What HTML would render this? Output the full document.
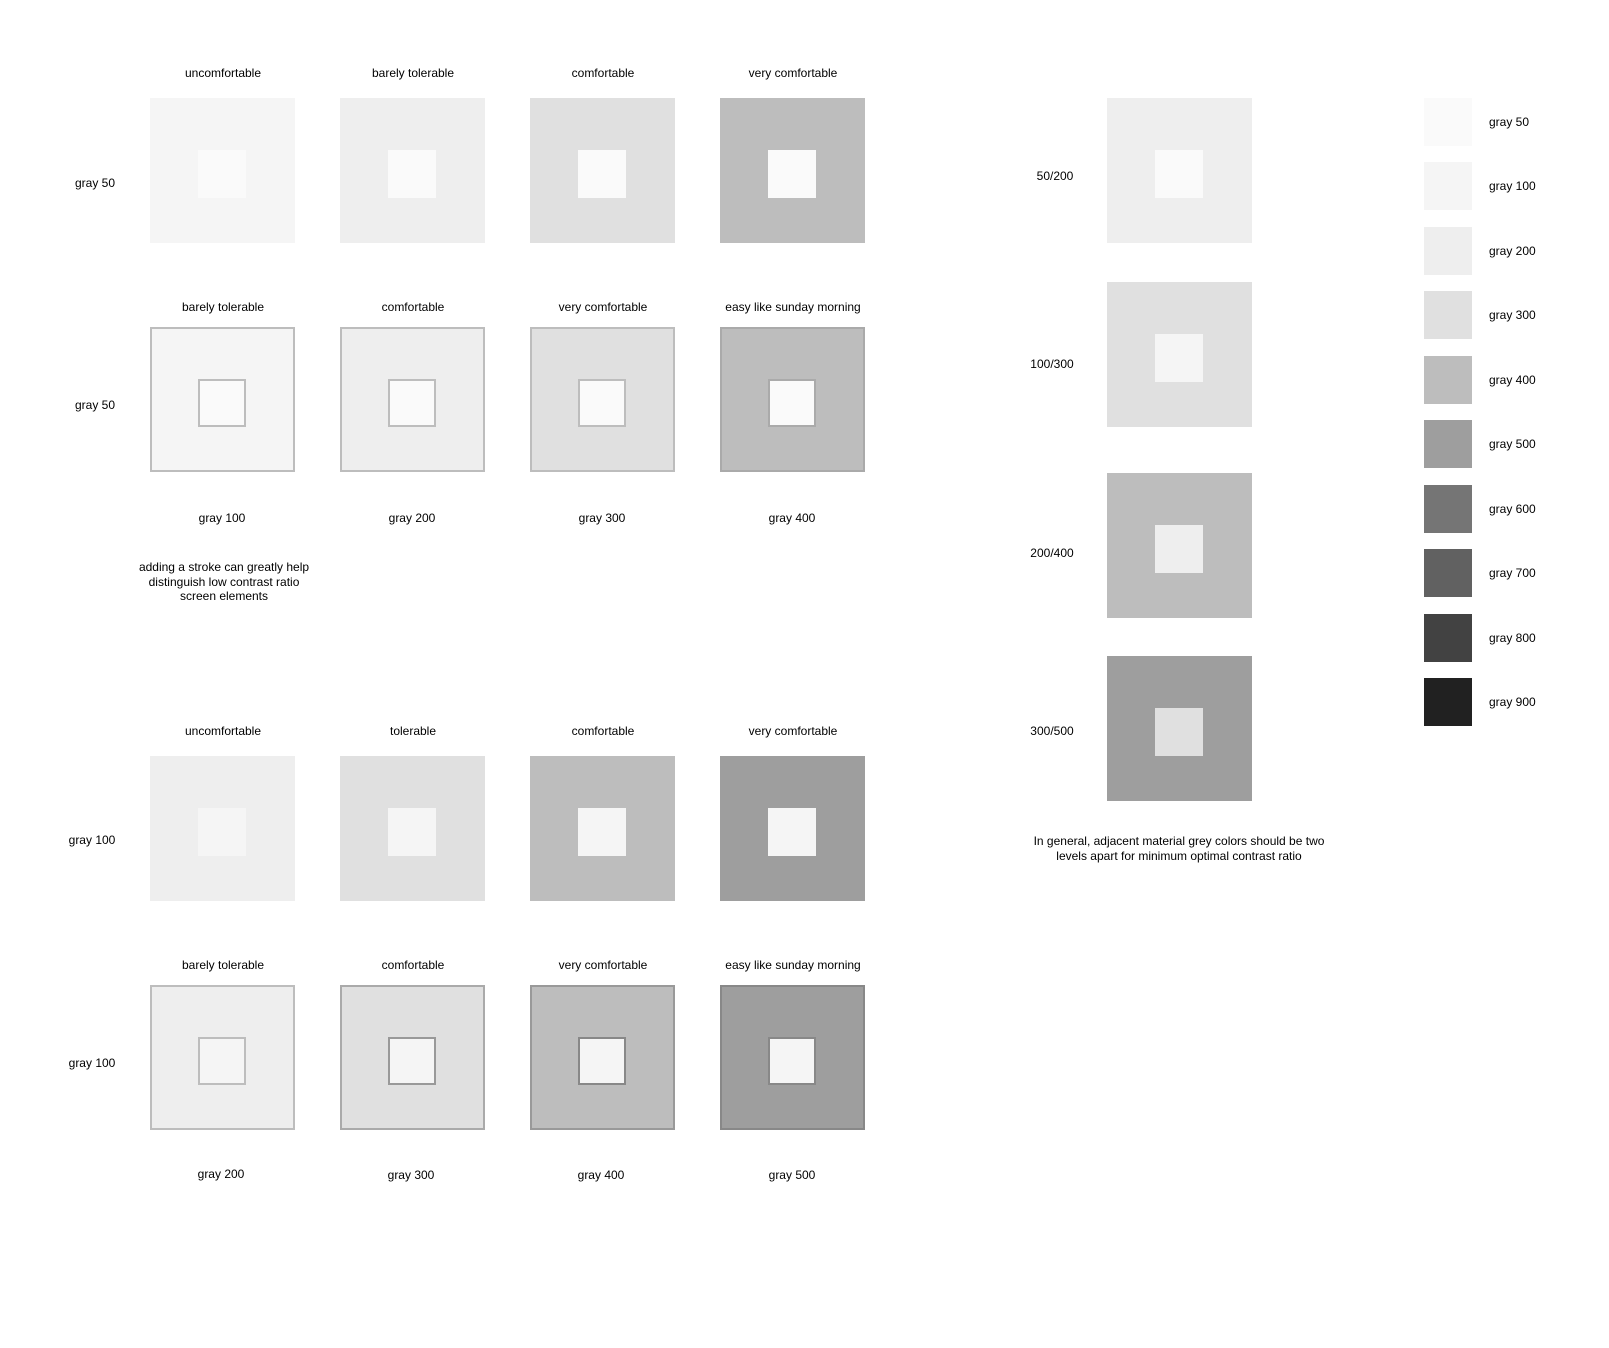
<!DOCTYPE html><html><head><style>
body{margin:0;width:1609px;height:1348px;background:#fff;position:relative;font-family:"Liberation Sans",sans-serif;font-size:12px;color:#000;overflow:hidden}
.b{position:absolute;width:145px;height:145px;box-sizing:border-box}
.i{position:absolute;left:48px;top:52px;width:48px;height:48px;box-sizing:border-box}
.s{border:2px solid #bdbdbd}.s .i{left:46px;top:50px;border:2px solid #bdbdbd}
.t{position:absolute;width:200px;text-align:center;transform:translateX(-100px)}
.sw{position:absolute;left:1431px;width:48px;height:48px}
.sl{position:absolute;left:1496px}
</style></head><body>
<div class="t" style="left:95px;top:176px">gray 50</div>
<div class="t" style="left:95px;top:398px">gray 50</div>
<div class="t" style="left:92px;top:833px">gray 100</div>
<div class="t" style="left:92px;top:1056px">gray 100</div>

<div class="t" style="left:223px;top:66px">uncomfortable</div>
<div class="t" style="left:413px;top:66px">barely tolerable</div>
<div class="t" style="left:603px;top:66px">comfortable</div>
<div class="t" style="left:793px;top:66px">very comfortable</div>
<div class="b" style="left:150px;top:98px;background:#f5f5f5"><div class="i" style="background:#fafafa"></div></div>
<div class="b" style="left:340px;top:98px;background:#eee"><div class="i" style="background:#fafafa"></div></div>
<div class="b" style="left:530px;top:98px;background:#e0e0e0"><div class="i" style="background:#fafafa"></div></div>
<div class="b" style="left:720px;top:98px;background:#bdbdbd"><div class="i" style="background:#fafafa"></div></div>

<div class="t" style="left:223px;top:300px">barely tolerable</div>
<div class="t" style="left:413px;top:300px">comfortable</div>
<div class="t" style="left:603px;top:300px">very comfortable</div>
<div class="t" style="left:793px;top:300px">easy like sunday morning</div>
<div class="b s" style="left:150px;top:327px;background:#f5f5f5"><div class="i" style="background:#fafafa"></div></div>
<div class="b s" style="left:340px;top:327px;background:#eee"><div class="i" style="background:#fafafa"></div></div>
<div class="b s" style="left:530px;top:327px;background:#e0e0e0"><div class="i" style="background:#fafafa"></div></div>
<div class="b s" style="left:720px;top:327px;background:#bdbdbd;border-color:#aaa"><div class="i" style="background:#fafafa;border-color:#aaa"></div></div>
<div class="t" style="left:222px;top:511px">gray 100</div>
<div class="t" style="left:412px;top:511px">gray 200</div>
<div class="t" style="left:602px;top:511px">gray 300</div>
<div class="t" style="left:792px;top:511px">gray 400</div>
<div class="t" style="left:224px;top:560px;line-height:14.5px">adding a stroke can greatly help<br>distinguish low contrast ratio<br>screen elements</div>

<div class="t" style="left:223px;top:724px">uncomfortable</div>
<div class="t" style="left:413px;top:724px">tolerable</div>
<div class="t" style="left:603px;top:724px">comfortable</div>
<div class="t" style="left:793px;top:724px">very comfortable</div>
<div class="b" style="left:150px;top:756px;background:#eee"><div class="i" style="background:#f5f5f5"></div></div>
<div class="b" style="left:340px;top:756px;background:#e0e0e0"><div class="i" style="background:#f5f5f5"></div></div>
<div class="b" style="left:530px;top:756px;background:#bdbdbd"><div class="i" style="background:#f5f5f5"></div></div>
<div class="b" style="left:720px;top:756px;background:#9e9e9e"><div class="i" style="background:#f5f5f5"></div></div>

<div class="t" style="left:223px;top:958px">barely tolerable</div>
<div class="t" style="left:413px;top:958px">comfortable</div>
<div class="t" style="left:603px;top:958px">very comfortable</div>
<div class="t" style="left:793px;top:958px">easy like sunday morning</div>
<div class="b s" style="left:150px;top:985px;background:#eee"><div class="i" style="background:#f5f5f5"></div></div>
<div class="b s" style="left:340px;top:985px;background:#e0e0e0;border-color:#aaa"><div class="i" style="background:#f5f5f5;border-color:#999"></div></div>
<div class="b s" style="left:530px;top:985px;background:#bdbdbd;border-color:#999"><div class="i" style="background:#f5f5f5;border-color:#888"></div></div>
<div class="b s" style="left:720px;top:985px;background:#9e9e9e;border-color:#888"><div class="i" style="background:#f5f5f5;border-color:#888"></div></div>
<div class="t" style="left:221px;top:1167px">gray 200</div>
<div class="t" style="left:411px;top:1168px">gray 300</div>
<div class="t" style="left:601px;top:1168px">gray 400</div>
<div class="t" style="left:792px;top:1168px">gray 500</div>

<div class="t" style="left:1055px;top:169px">50/200</div>
<div class="t" style="left:1052px;top:357px">100/300</div>
<div class="t" style="left:1052px;top:546px">200/400</div>
<div class="t" style="left:1052px;top:724px">300/500</div>
<div class="b" style="left:1107px;top:98px;background:#eee"><div class="i" style="background:#fafafa"></div></div>
<div class="b" style="left:1107px;top:282px;background:#e0e0e0"><div class="i" style="background:#f5f5f5"></div></div>
<div class="b" style="left:1107px;top:473px;background:#bdbdbd"><div class="i" style="background:#eee"></div></div>
<div class="b" style="left:1107px;top:656px;background:#9e9e9e"><div class="i" style="background:#e0e0e0"></div></div>
<div class="t" style="left:1179px;top:834px;width:340px;transform:translateX(-170px);line-height:15px">In general, adjacent material grey colors should be two<br>levels apart for minimum optimal contrast ratio</div>

<div class="sw" style="left:1424px;top:98px;background:#fafafa"></div><div class="sl" style="left:1489px;top:115px">gray 50</div>
<div class="sw" style="left:1424px;top:162px;background:#f5f5f5"></div><div class="sl" style="left:1489px;top:179px">gray 100</div>
<div class="sw" style="left:1424px;top:227px;background:#eee"></div><div class="sl" style="left:1489px;top:244px">gray 200</div>
<div class="sw" style="left:1424px;top:291px;background:#e0e0e0"></div><div class="sl" style="left:1489px;top:308px">gray 300</div>
<div class="sw" style="left:1424px;top:356px;background:#bdbdbd"></div><div class="sl" style="left:1489px;top:373px">gray 400</div>
<div class="sw" style="left:1424px;top:420px;background:#9e9e9e"></div><div class="sl" style="left:1489px;top:437px">gray 500</div>
<div class="sw" style="left:1424px;top:485px;background:#757575"></div><div class="sl" style="left:1489px;top:502px">gray 600</div>
<div class="sw" style="left:1424px;top:549px;background:#616161"></div><div class="sl" style="left:1489px;top:566px">gray 700</div>
<div class="sw" style="left:1424px;top:614px;background:#424242"></div><div class="sl" style="left:1489px;top:631px">gray 800</div>
<div class="sw" style="left:1424px;top:678px;background:#212121"></div><div class="sl" style="left:1489px;top:695px">gray 900</div>
</body></html>
